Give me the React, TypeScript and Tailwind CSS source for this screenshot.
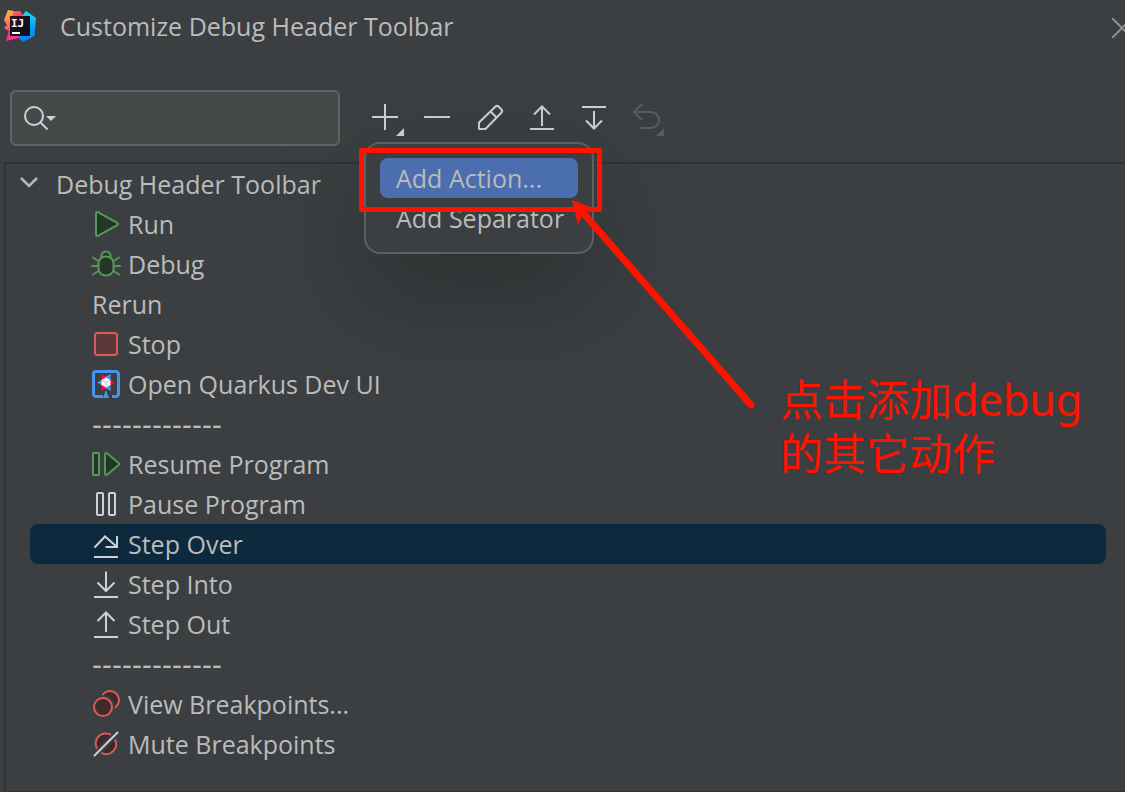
import type { ReactNode } from "react";

function RowIcon({ children }: { children: ReactNode }) {
  return (
    <svg
      className="-ml-0.5 size-8 shrink-0"
      viewBox="0 0 32 32"
      fill="none"
      stroke="#ced0d6"
      strokeWidth="2"
      aria-hidden="true"
    >
      {children}
    </svg>
  );
}

function ToolIcon({ children }: { children: ReactNode }) {
  return (
    <svg
      className="size-10"
      viewBox="0 0 40 40"
      fill="none"
      stroke="currentColor"
      strokeWidth="2"
      aria-hidden="true"
    >
      {children}
    </svg>
  );
}

function AppLogo() {
  return (
    <svg className="size-8 shrink-0" viewBox="0 0 32 32" aria-hidden="true">
      <defs>
        <linearGradient id="warm" x1="0" y1="0" x2="0.2" y2="1">
          <stop offset="0" stopColor="#fdc04f" />
          <stop offset="0.5" stopColor="#ff8a3c" />
          <stop offset="1" stopColor="#ff3d8b" />
        </linearGradient>
        <linearGradient id="pink" x1="0" y1="0" x2="1" y2="1">
          <stop offset="0" stopColor="#ff6f6a" />
          <stop offset="1" stopColor="#fe2857" />
        </linearGradient>
        <linearGradient id="cool" x1="0" y1="0" x2="0" y2="1">
          <stop offset="0" stopColor="#07e8f5" />
          <stop offset="0.5" stopColor="#0aa0f2" />
          <stop offset="1" stopColor="#087cfa" />
        </linearGradient>
        <linearGradient id="screen" x1="0" y1="0" x2="1" y2="1">
          <stop offset="0" stopColor="#3c0f25" />
          <stop offset="0.5" stopColor="#16101c" />
          <stop offset="1" stopColor="#06121c" />
        </linearGradient>
      </defs>
      <path d="M4 0l6 1v6l-2 16-8-5 3-3-3-5z" fill="url(#warm)" />
      <path d="M9 1.5L16 1l4 6-12 1z" fill="url(#pink)" />
      <path d="M17 7l5-6 10 7-1.500 18L19 32l-7-6 8-9z" fill="url(#cool)" />
      <path d="M5 20l3 6h8l-3 2.500L2 31z" fill="#f9318f" />
      <path d="M6 6h20v20H6z" fill="url(#screen)" />
      <text
        x="7"
        y="17"
        fill="#fff"
        fontSize="11"
        fontWeight="700"
        fontFamily="DejaVu Sans Mono, monospace"
      >
        IJ
      </text>
      <path d="M8 22h8v2H8z" fill="#fff" />
    </svg>
  );
}

type Action = { label: string; icon?: ReactNode; separator?: boolean; selected?: boolean };

const actions: Action[] = [
  {
    label: "Run",
    icon: (
      <path
        d="M6 5.2v21.6c0 1 1 1.6 1.9 1.1l19.3-10.8c.9-.5.9-1.7 0-2.2L7.9 4.1C7 3.6 6 4.2 6 5.2z"
        fill="#253627"
        stroke="#57965c"
      />
    ),
  },
  {
    label: "Debug",
    icon: (
      <g stroke="#57965c" fill="#253627" strokeLinecap="round">
        <path d="M11.5 9.5V8a4.5 4.5 0 0 1 9 0v1.5" />
        <rect x="8.5" y="8.5" width="15" height="19" rx="7" />
        <path d="M2 18h6M24 18h6M3 9.5l5.5 3.5M29 9.5L23.5 13M3 26.5L8.5 23M29 26.5L23.5 23" />
      </g>
    ),
  },
  { label: "Rerun" },
  {
    label: "Stop",
    icon: <rect x="5" y="5" width="22" height="22" rx="2.5" fill="#5e3838" stroke="#db5c5c" />,
  },
  {
    label: "Open Quarkus Dev UI",
    icon: (
      <g stroke="none">
        <path
          d="M13 28.5H6A2.5 2.5 0 0 1 3.5 26V6A2.5 2.5 0 0 1 6 3.5H26A2.5 2.5 0 0 1 28.5 6V26A2.5 2.5 0 0 1 26 28.5H22"
          stroke="#4695eb"
          strokeWidth="3"
        />
        <path d="M13 30l3-8 3 8z" fill="#4695eb" />
        <path d="M11 6l6 3-5 5zM25 14.5l-6-3.5v7zM11 23l6-3-5-5z" fill="#ff004a" />
        <path d="M21 6l-6 3 5 5zM7 14.5l6-3.5v7zM21 23l-6-3 5-5z" fill="#4695eb" />
        <path d="M16 9.5l4.5 2.5v5L16 19.5 11.5 17v-5z" fill="#fff" />
        <path d="M12 12.5l4 2 4-2M16 14.5v4" stroke="#b9bcc0" strokeWidth="1" />
      </g>
    ),
  },
  { label: "-------------", separator: true },
  {
    label: "Resume Program",
    icon: (
      <g fill="#253627" stroke="#57965c">
        <rect x="3" y="5" width="6" height="22" rx="1" />
        <path d="M15 6.5v19c0 1.3 1.4 2 2.4 1.1l11.2-9.5c.7-.6.7-1.6 0-2.2L17.4 5.4C16.4 4.5 15 5.2 15 6.5z" />
      </g>
    ),
  },
  {
    label: "Pause Program",
    icon: (
      <>
        <rect x="7" y="5" width="6" height="22" rx="1" />
        <rect x="19" y="5" width="6" height="22" rx="1" />
      </>
    ),
  },
  {
    label: "Step Over",
    selected: true,
    icon: <path d="M4.5 19.5L15 8.5l12 10.5M27 8v11H15.5M4 29h24" />,
  },
  {
    label: "Step Into",
    icon: <path d="M16 3.5V23M7.5 14.5L16 23l8.5-8.5M4 29h24" />,
  },
  {
    label: "Step Out",
    icon: <path d="M16 24V5M7.5 13L16 4.5l8.5 8.5M4 29h24" />,
  },
  { label: "-------------", separator: true },
  {
    label: "View Breakpoints...",
    icon: (
      <g fill="#402929" stroke="#db5c5c">
        <circle cx="20" cy="12" r="9" />
        <circle cx="13" cy="19" r="12" fill="#3c3f41" stroke="none" />
        <circle cx="13" cy="19" r="9" />
      </g>
    ),
  },
  {
    label: "Mute Breakpoints",
    icon: (
      <>
        <path d="M7 20.5A10 10 0 0 1 20.8 6.9z" fill="#402929" stroke="none" />
        <path d="M25 11.5A10 10 0 0 1 11.5 24.9z" fill="#402929" stroke="none" />
        <path d="M7 20.5A10 10 0 0 1 20.8 6.9M25 11.5A10 10 0 0 1 11.5 24.9" stroke="#db5c5c" />
        <path d="M4.5 27.5l23-23" strokeLinecap="round" />
      </>
    ),
  },
];

function ActionRow({ label, icon, separator, selected }: Action) {
  return (
    <li
      role="treeitem"
      aria-selected={!!selected}
      className={`flex h-10 items-center gap-1.5 rounded-lg pl-[62px] ${selected ? "bg-[#0d293e]" : ""}`}
    >
      {icon && <RowIcon>{icon}</RowIcon>}
      <span className={separator ? "pt-0.5 font-['Liberation_Sans',sans-serif] text-[30px]" : ""}>
        {label}
      </span>
    </li>
  );
}

function AddMenu() {
  return (
    <div
      role="menu"
      className="absolute -left-px top-11 z-10 w-[230px] rounded-2xl border-2 border-[#5e6060] bg-[#3c3f41] p-[14px] shadow-[0_40px_100px_rgba(0,0,0,0.25)]"
    >
      <button
        role="menuitem"
        className="flex h-10 w-full items-center whitespace-nowrap rounded-lg bg-[#4b6eaf] px-4"
      >
        Add Action...
      </button>
      <button
        role="menuitem"
        className="flex h-10 w-full items-center whitespace-nowrap rounded-lg px-4"
      >
        Add Separator
      </button>
    </div>
  );
}

function Toolbar() {
  return (
    <div role="toolbar" className="flex items-center gap-3 text-[#ced0d6]">
      <div className="relative">
        <button aria-label="Add" className="block">
          <ToolIcon>
            <path d="M20 6v26M7 19h26" />
            <path d="M39 30v8h-8z" fill="currentColor" stroke="none" />
          </ToolIcon>
        </button>
        <div className="text-[#bbbbbb]">
          <AddMenu />
        </div>
      </div>
      <button aria-label="Remove">
        <ToolIcon>
          <path d="M7 19h26" />
        </ToolIcon>
      </button>
      <button aria-label="Edit">
        <ToolIcon>
          <path
            d="M10 31v-6.5L26.3 8.7a2.5 2.5 0 0 1 3.5 0l2.5 2.5a2.5 2.5 0 0 1 0 3.5L16.5 31zM21.5 13.5l6 6"
            strokeLinejoin="round"
          />
        </ToolIcon>
      </button>
      <button aria-label="Move up">
        <ToolIcon>
          <path d="M21 28V8M13 16.5L21 8.5l8 8M9 31h24" />
        </ToolIcon>
      </button>
      <button aria-label="Move down">
        <ToolIcon>
          <path d="M21 13v17M13 22.5l8 8 8-8M9 9h24" />
        </ToolIcon>
      </button>
      <button aria-label="Restore" disabled className="text-[#5a5d5f]">
        <ToolIcon>
          <path d="M17 6l-8 8 8 8M9 14h17a8 8 0 0 1 0 16H15" />
          <path d="M39 30v8h-8z" fill="currentColor" stroke="none" />
        </ToolIcon>
      </button>
    </div>
  );
}

// Red marks drawn over the dialog: frame, arrow and note
function Annotation() {
  return (
    <div className="pointer-events-none absolute left-[359px] top-[148px] z-20 text-[#ff1200]">
      <div className="h-16 w-[243px] rounded-xs border-5 border-[#ff1200]" />
      <svg
        className="absolute left-[201px] top-10"
        width="200"
        height="230"
        viewBox="560 188 200 230"
        aria-hidden="true"
      >
        <path d="M584 214L751 405" stroke="#ff1200" strokeWidth="7" strokeLinecap="round" />
        <path d="M572 200l23 9-13 6-4 10z" fill="#ff1200" />
      </svg>
      <p className="absolute left-[421px] top-[225px] whitespace-nowrap font-['Noto_Sans','Noto_Sans_CJK_SC',sans-serif] text-[43px] leading-[54px]">
        点击添加debug
        <br />
        的其它动作
      </p>
    </div>
  );
}

export default function App() {
  return (
    <div className="relative flex min-h-screen flex-col overflow-hidden bg-[#3c3f41] font-['Open_Sans',sans-serif] text-[25px] leading-10 text-[#bbbbbb]">
      <header className="flex h-[52px] items-center gap-6 pl-1">
        <AppLogo />
        <h1 className="flex-1">Customize Debug Header Toolbar</h1>
        <button aria-label="Close" className="-mr-[7px] pt-1">
          <svg className="size-5" viewBox="0 0 20 20" stroke="#8c8e8f" strokeWidth="2" aria-hidden="true">
            <path d="M0 0l20 20M20 0L0 20" />
          </svg>
        </button>
      </header>

      <div className="flex items-center gap-[25px] pb-4 pl-[10px] pt-[38px]">
        <label className="flex h-14 w-[330px] items-center rounded-md border-2 border-[#646464] bg-[#45494a] pl-[10px]">
          <svg
            className="h-9 w-9 shrink-0"
            viewBox="0 0 36 36"
            fill="none"
            stroke="#ced0d6"
            strokeWidth="2"
            aria-hidden="true"
          >
            <circle cx="12" cy="16" r="9" />
            <path d="M18.5 22.5l7 7" />
            <path d="M24 16h10l-5 5z" fill="#ced0d6" stroke="none" />
          </svg>
          <input type="text" aria-label="Search" className="w-full min-w-0 bg-transparent px-2 outline-none" />
        </label>
        <Toolbar />
      </div>

      <main className="ml-1 flex-1 border-b border-l-2 border-t-2 border-[#323232] pb-6">
        <ul role="tree" className="ml-6 mr-[19px]">
          <li role="treeitem" aria-expanded="true">
            <div className="-ml-3 flex h-10 items-center gap-[14px]">
              <svg
                className="h-6 w-6"
                viewBox="0 0 24 24"
                fill="none"
                stroke="#b4b8bf"
                strokeWidth="2.5"
                aria-hidden="true"
              >
                <path d="M3 6l8 8 8-8" />
              </svg>
              <span>Debug Header Toolbar</span>
            </div>
            <ul role="group">
              {actions.map((action, index) => (
                <ActionRow key={index} {...action} />
              ))}
            </ul>
          </li>
        </ul>
      </main>

      <Annotation />
    </div>
  );
}
